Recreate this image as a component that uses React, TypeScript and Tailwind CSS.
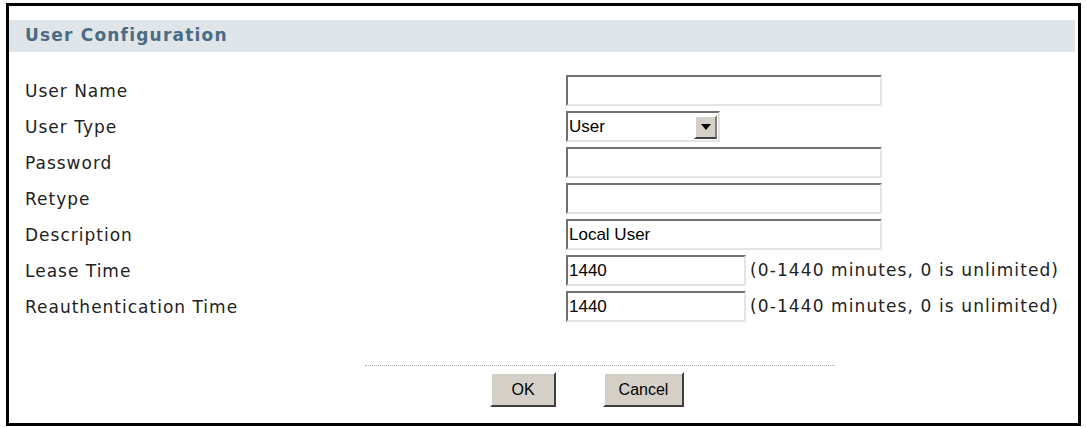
import React from 'react';

const rows = [
  { label: 'User Name', kind: 'text', value: '' },
  { label: 'User Type', kind: 'select', value: 'User' },
  { label: 'Password', kind: 'text', value: '' },
  { label: 'Retype', kind: 'text', value: '' },
  { label: 'Description', kind: 'text', value: 'Local User' },
  { label: 'Lease Time', kind: 'short', value: '1440' },
  { label: 'Reauthentication Time', kind: 'short', value: '1440' },
];

const sunken =
  'h-[31px] bg-white border-2 border-t-[#6f6f6f] border-l-[#6f6f6f] border-b-[#e4e4e4] border-r-[#e4e4e4] font-["Liberation_Sans",Arial,sans-serif] text-[17px] tracking-normal text-black leading-[27px] px-[1px]';

function Field({ kind, value }: { kind: string; value: string }) {
  if (kind === 'select') {
    return (
      <div className={`${sunken} w-[154px] flex items-center justify-between pr-0`}>
        <span>{value}</span>
        <div className="w-[23px] h-[24px] mr-[1px] bg-[#d4d0c8] border-2 border-t-white border-l-white border-b-[#404040] border-r-[#808080] flex items-center justify-center">
          <svg width="10" height="6" viewBox="0 0 10 6">
            <path d="M0 0h10L5 6z" fill="#000" />
          </svg>
        </div>
      </div>
    );
  }
  if (kind === 'short') {
    return (
      <div className="flex items-center gap-[4px]">
        <div className={`${sunken} w-[180px]`}>{value}</div>
        <span className="text-[17px] tracking-[1.1px] text-[#222]">(0-1440 minutes, 0 is unlimited)</span>
      </div>
    );
  }
  return <div className={`${sunken} w-[316px]`}>{value}</div>;
}

function Button({ children, w }: { children: React.ReactNode; w: string }) {
  return (
    <button
      className={`${w} h-[35px] bg-[#d4d0c8] border-2 border-t-white border-l-white border-b-[#404040] border-r-[#404040] font-["Liberation_Sans",Arial,sans-serif] text-[16px] text-black`}
    >
      {children}
    </button>
  );
}

export default function App() {
  return (
    <div className="w-[1087px] h-[428px] bg-white pt-[3px] pl-[6px] font-['DejaVu_Sans',Verdana,sans-serif]">
      <div className="w-[1075px] h-[423px] border-[3px] border-black flex flex-col">
        <div className="mt-[14px] mr-[3px] h-[32px] bg-[#dfe5e8] flex items-center pl-[16px]">
          <span className="text-[17px] tracking-[1.2px] font-bold text-[#4b6b84]">User Configuration</span>
        </div>
        <div className="mt-[23px] flex flex-col gap-[5px] pl-[16px] text-[17px] tracking-[1px] text-[#222]">
          {rows.map((r) => (
            <div key={r.label} className="grid grid-cols-[541px_1fr] items-center">
              <span className="pt-[2px]">{r.label}</span>
              <Field kind={r.kind} value={r.value} />
            </div>
          ))}
        </div>
        <div className="mt-[43px] ml-[356px] w-[470px] border-t border-dotted border-[#aaa]" />
        <div className="mt-[6px] ml-[481px] flex gap-[47px]">
          <Button w="w-[66px]">OK</Button>
          <Button w="w-[81px]">Cancel</Button>
        </div>
      </div>
    </div>
  );
}
